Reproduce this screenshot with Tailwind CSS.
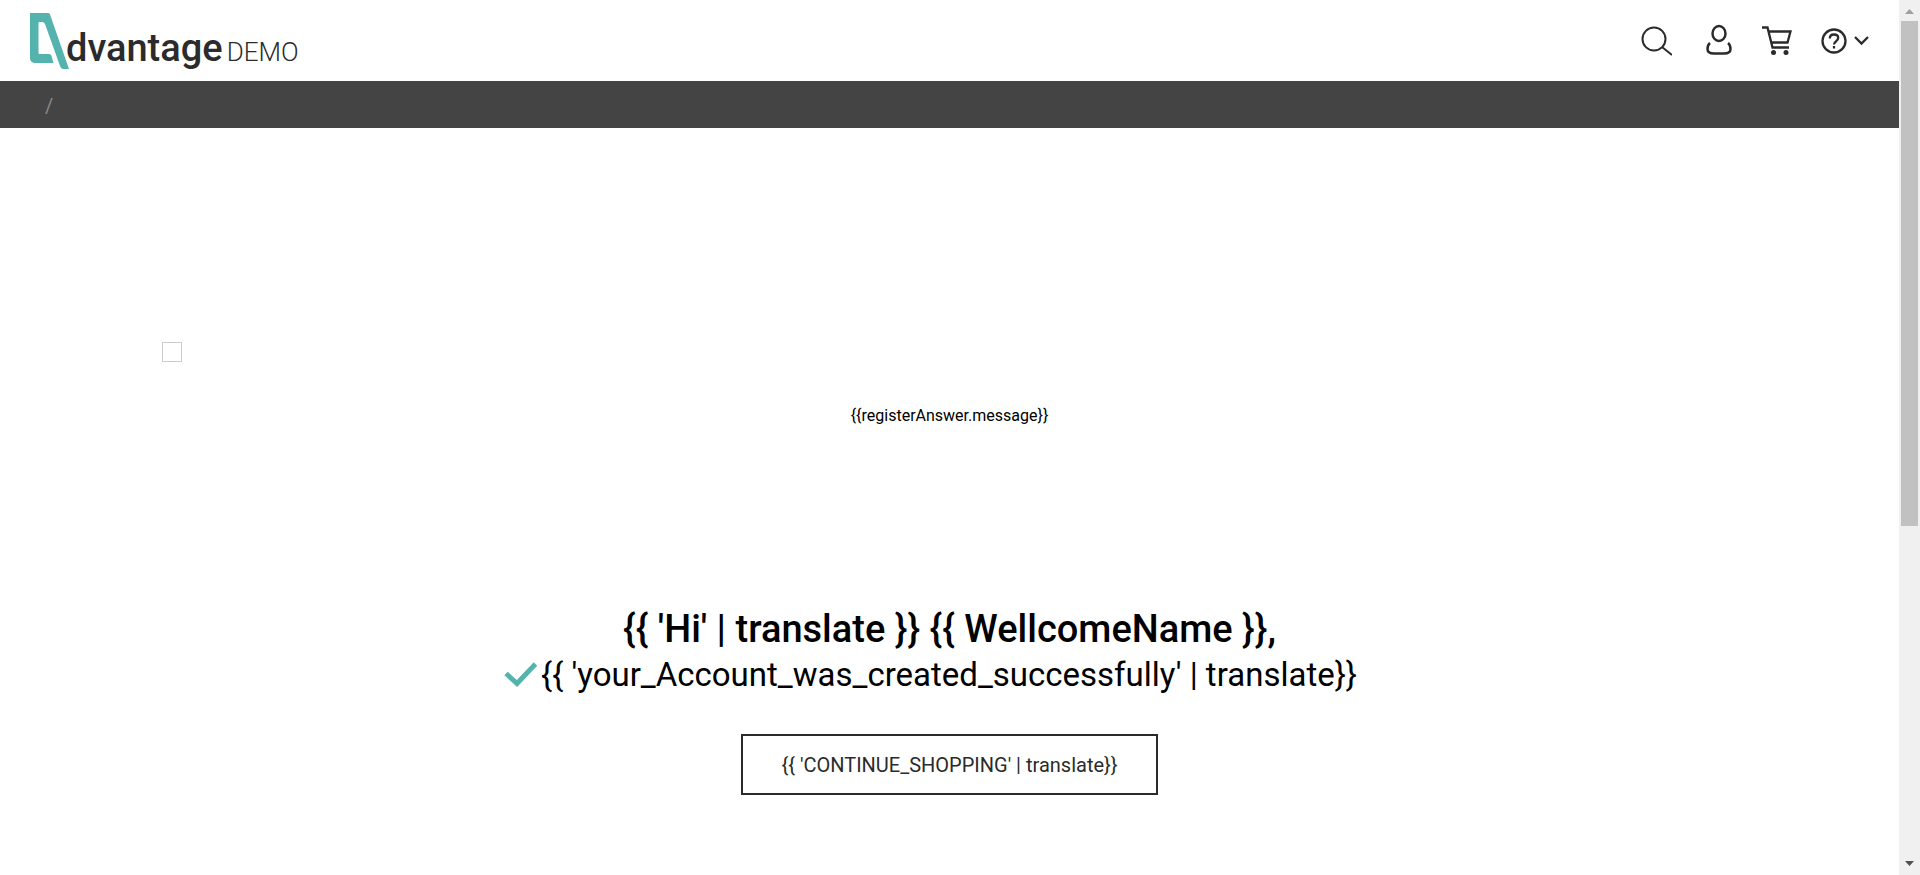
<!DOCTYPE html>
<html lang="en">
<head>
<meta charset="utf-8">
<title>Advantage DEMO</title>
<script src="https://cdn.jsdelivr.net/npm/@tailwindcss/browser@4"></script>
</head>
<body class="flex h-screen overflow-hidden bg-white font-['Roboto',sans-serif] text-black">
<div class="min-w-0 flex-1">
  <header class="flex h-[81px] items-start justify-between pr-[30px] pl-[29px] text-[#2b2b2b]">
    <a href="#" class="flex pt-3" aria-label="Advantage DEMO home">
      <svg class="mt-px h-[57px] w-[41px]" viewBox="0 0 41 57" fill="#55b3ae" aria-hidden="true">
        <path fill-rule="evenodd" d="M1 0H19.500Q20.500 0 21 1.500L40 56H34.500Q32 56 31 53L16 11Q15 9 13.500 9H10.500Q9.500 9 9.500 10V40Q9.500 41 10.500 41H20Q22 41 22.500 43L24.500 50H5Q1 49 1 45Z"/>
      </svg>
      <span class="-ml-1 flex items-baseline gap-1 leading-[72px]">
        <span class="text-[38px] font-medium">dvantage</span>
        <span class="text-[26px] font-light">DEMO</span>
      </span>
    </a>
    <nav class="flex pt-6" aria-label="Account">
      <button class="mr-[34px]" aria-label="Search">
        <svg class="h-8 w-[31px]" viewBox="0 0 31 32" fill="none" stroke="#2b2b2b" stroke-width="2"><circle cx="13" cy="15" r="11.500"/><path d="M21 23L31 31"/></svg>
      </button>
      <button class="mr-[30px]" aria-label="User">
        <svg class="h-8 w-[26px]" viewBox="0 0 26 32" fill="none" stroke="#2b2b2b" stroke-width="2.500"><ellipse cx="13" cy="9.500" rx="6.500" ry="7.500"/><path d="M4 19Q1.500 21 1.500 25Q1.500 29.500 8 29.500H18Q24.500 29.500 24.500 25Q24.500 21 22 19"/></svg>
      </button>
      <button class="mr-[29px]" aria-label="Shopping cart">
        <svg class="h-8 w-[30px]" viewBox="0 0 30 32" fill="none" stroke="#2b2b2b" stroke-width="2.300"><path d="M0 3.500H5.500L10.500 23.500H27M6.500 7.500H28.500L25.500 18.500H9.500"/><g fill="#2b2b2b" stroke="none"><circle cx="11.500" cy="28.500" r="2.500"/><circle cx="24" cy="28.500" r="2.500"/></g></svg>
      </button>
      <button aria-label="Help">
        <svg class="h-8 w-12" viewBox="0 0 48 32" fill="none" stroke="#2b2b2b" stroke-width="2.300"><circle cx="13" cy="17" r="11.500"/><path d="M8.800 14.500Q8.800 10.500 13 10.500Q17.200 10.500 17.200 14Q17.200 15.500 15.200 17.200Q13 18.800 13 20.500"/><path d="M13 22V24.500"/><path d="M34 13L40.500 19.500L47 13"/></svg>
      </button>
    </nav>
  </header>
  <nav class="h-[47px] bg-[#444] pl-[45px] text-[20px] leading-[50px] text-[#888]" aria-label="Breadcrumb">/</nav>
  <main class="flex flex-col items-center">
    <div class="mt-[214px] ml-[162px] size-5 self-start border border-[#ccc]" role="img" aria-label="Loading"></div>
    <p class="mt-[42px] text-[16px] leading-6">{{registerAnswer.message}}</p>
    <h1 class="mt-[177px] text-[38px] leading-[48px] font-medium">{{ 'Hi' | translate }} {{ WellcomeName }},</h1>
    <p class="flex items-center gap-1 pr-[38px] text-[33px] leading-[44px]">
      <svg class="h-[26px] w-[33px]" viewBox="0 0 33 26" fill="none" stroke="#55b3ae" stroke-width="5" aria-hidden="true"><path d="M2 11.500L13 21.500L31.500 2"/></svg>
      <span>{{ 'your_Account_was_created_successfully' | translate}}</span>
    </p>
    <button class="mt-[37px] h-[61px] border-2 border-[#2b2b2b] px-[38px] pt-px text-[20px] text-[#2b2b2b]">{{ 'CONTINUE_SHOPPING' | translate}}</button>
  </main>
</div>
<aside class="flex w-[21px] flex-col items-center bg-[#f0f0f0]" aria-hidden="true">
  <svg class="h-[21px] w-[21px] shrink-0" viewBox="0 0 21 21" fill="#a0a0a0"><path d="M6 14L10.500 9L15 14Z"/></svg>
  <div class="h-[505px] w-[17px] bg-[#c1c1c1]"></div>
  <svg class="mt-auto h-[21px] w-[21px] shrink-0" viewBox="0 0 21 21" fill="#505050"><path d="M6 7H15L10.500 12Z"/></svg>
</aside>
</body>
</html>
